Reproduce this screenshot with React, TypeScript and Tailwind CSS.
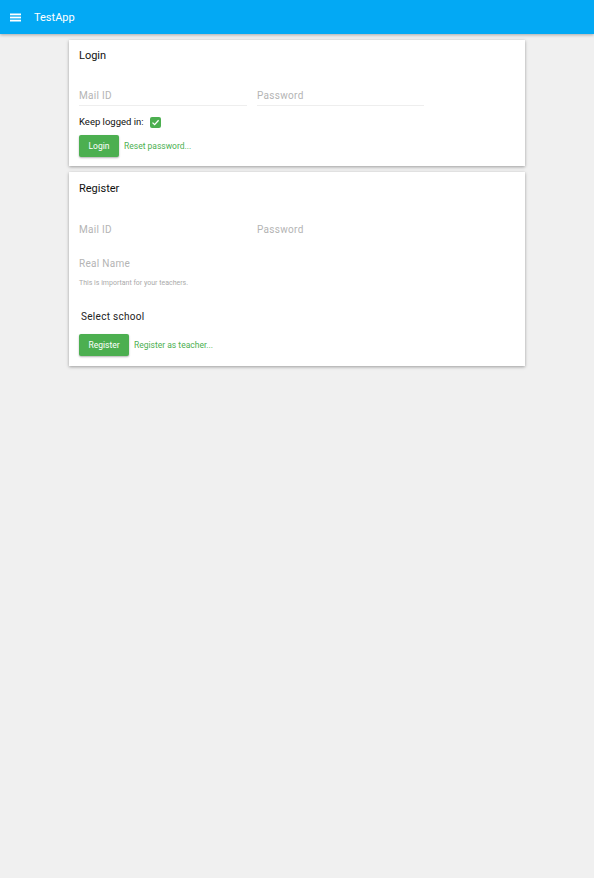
import React from "react";

function Field({ label, underline, width }: { label: string; underline: boolean; width: string }) {
  return (
    <div className={`${width} h-[21px] pt-[1px] flex items-center ${underline ? "border-b border-[#eeeeee]" : ""}`}>
      <span className="text-[10px] tracking-[0.3px] text-[#b4b4b4]">{label}</span>
    </div>
  );
}

function Btn({ label, width }: { label: string; width: string }) {
  return (
    <div className={`${width} h-[22px] pt-[1px] rounded-[2px] bg-[#4caf50] text-white text-[8.5px] flex items-center justify-center shadow-[0_1px_2px_rgba(0,0,0,0.3)]`}>
      {label}
    </div>
  );
}

export default function App() {
  return (
    <div className="min-h-[878px] bg-[#f0f0f0]" style={{ fontFamily: "Roboto, 'Noto Sans', sans-serif" }}>
      <div className="h-[34px] bg-[#03a9f4] flex items-center shadow-[0_1px_3px_rgba(0,0,0,0.3)] relative">
        <svg className="ml-[10px]" width="11" height="9" viewBox="0 0 11 9">
          <rect x="0" y="0.5" width="11" height="1.8" fill="#fff" />
          <rect x="0" y="3.6" width="11" height="1.8" fill="#fff" />
          <rect x="0" y="6.7" width="11" height="1.8" fill="#fff" />
        </svg>
        <span className="ml-[13px] pt-[2px] text-white text-[11px]">TestApp</span>
      </div>

      <div className="w-[456px] mx-auto pt-[6px] flex flex-col gap-[6px]">
        <div className="bg-white shadow-[0_1px_3px_rgba(0,0,0,0.35)] px-[10px] pt-[7px] pb-[9px]">
          <div className="h-[16px] leading-[18px] text-[11px] text-[#111]">Login</div>
          <div className="mt-[22px] flex gap-[10px]">
            <Field label="Mail ID" underline width="w-[168px]" />
            <Field label="Password" underline width="w-[167px]" />
          </div>
          <div className="mt-[8px] h-[16px] flex items-center">
            <span className="pt-[1px] text-[9.5px] text-[#111]">Keep logged in:</span>
            <div className="ml-[6px] w-[11px] h-[11px] rounded-[2px] bg-[#4caf50] flex items-center justify-center">
              <svg width="9" height="9" viewBox="0 0 9 9">
                <path d="M1.5 4.6 L3.6 6.6 L7.6 2.2" stroke="#fff" strokeWidth="1.3" fill="none" />
              </svg>
            </div>
          </div>
          <div className="mt-[5px] flex items-center">
            <Btn label="Login" width="w-[40px]" />
            <span className="ml-[5px] pt-[1px] text-[8.5px] text-[#4caf50]">Reset password...</span>
          </div>
        </div>

        <div className="bg-white shadow-[0_1px_3px_rgba(0,0,0,0.35)] px-[10px] pt-[8px] pb-[10px]">
          <div className="h-[16px] leading-[18px] text-[11px] text-[#111]">Register</div>
          <div className="mt-[22px] flex gap-[10px]">
            <Field label="Mail ID" underline={false} width="w-[168px]" />
            <Field label="Password" underline={false} width="w-[167px]" />
          </div>
          <div className="mt-[13px]">
            <Field label="Real Name" underline={false} width="w-[168px]" />
          </div>
          <div className="mt-[4px] h-[10px] leading-[12px] text-[7px] text-[#aaaaaa]">This is important for your teachers.</div>
          <div className="mt-[21px] h-[16px] leading-[18px] pl-[2px] text-[10px] tracking-[0.3px] text-[#222]">Select school</div>
          <div className="mt-[10px] flex items-center">
            <Btn label="Register" width="w-[50px]" />
            <span className="ml-[5px] pt-[1px] text-[8.5px] text-[#4caf50]">Register as teacher...</span>
          </div>
        </div>
      </div>
    </div>
  );
}
